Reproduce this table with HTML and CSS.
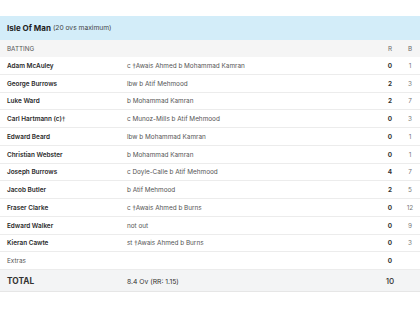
FILE: index.html
```html
<!DOCTYPE html>
<html>
<head>
<meta charset="utf-8">
<link rel="stylesheet" href="styles.css">
</head>
<body>
<div class="card">
  <div class="team"><span class="team-name">Isle Of Man</span><span class="team-sub">(20 ovs maximum)</span></div>
  <div class="row head"><span class="name">BATTING</span><span class="how"></span><span class="r">R</span><span class="b">B</span></div>
  <div class="row"><span class="name">Adam McAuley</span><span class="how">c <span class="dg">†</span>Awais Ahmed b Mohammad Kamran</span><span class="r">0</span><span class="b">1</span></div>
  <div class="row"><span class="name">George Burrows</span><span class="how">lbw b Atif Mehmood</span><span class="r">2</span><span class="b">3</span></div>
  <div class="row"><span class="name">Luke Ward</span><span class="how">b Mohammad Kamran</span><span class="r">2</span><span class="b">7</span></div>
  <div class="row"><span class="name">Carl Hartmann (c)<span class="dg">†</span></span><span class="how">c Munoz-Mills b Atif Mehmood</span><span class="r">0</span><span class="b">3</span></div>
  <div class="row"><span class="name">Edward Beard</span><span class="how">lbw b Mohammad Kamran</span><span class="r">0</span><span class="b">1</span></div>
  <div class="row"><span class="name">Christian Webster</span><span class="how">b Mohammad Kamran</span><span class="r">0</span><span class="b">1</span></div>
  <div class="row"><span class="name">Joseph Burrows</span><span class="how">c Doyle-Calle b Atif Mehmood</span><span class="r">4</span><span class="b">7</span></div>
  <div class="row"><span class="name">Jacob Butler</span><span class="how">b Atif Mehmood</span><span class="r">2</span><span class="b">5</span></div>
  <div class="row"><span class="name">Fraser Clarke</span><span class="how">c <span class="dg">†</span>Awais Ahmed b Burns</span><span class="r">0</span><span class="b">12</span></div>
  <div class="row"><span class="name">Edward Walker</span><span class="how">not out</span><span class="r">0</span><span class="b">9</span></div>
  <div class="row"><span class="name">Kieran Cawte</span><span class="how">st <span class="dg">†</span>Awais Ahmed b Burns</span><span class="r">0</span><span class="b">3</span></div>
  <div class="row extras"><span class="name">Extras</span><span class="how"></span><span class="r">0</span><span class="b"></span></div>
  <div class="row total"><span class="name">TOTAL</span><span class="how">8.4 Ov (RR: 1.15)</span><span class="r">10</span><span class="b"></span></div>
</div>
</body>
</html>
```

FILE: styles.css
```css
html, body {
  margin: 0;
  padding: 0;
  background: #ffffff;
}
body {
  font-family: Inter, "Open Sans", sans-serif;
  color: #222;
}
.card {
  margin-top: 16px;
}
.team {
  height: 24px;
  background: #d3edf9;
  display: flex;
  align-items: center;
  padding-left: 7px;
  gap: 2px;
}
.team-name {
  font-size: 8px;
  font-weight: 700;
  color: #222;
}
.team-sub {
  font-size: 6.7px;
  color: #444;
}
.row {
  display: grid;
  grid-template-columns: 127px 1fr 20px 20px;
  align-items: center;
  height: 17.75px;
  box-sizing: border-box;
  border-bottom: 1px solid #ececec;
  font-size: 6.4px;
  padding-top: 1px;
}
.dg {
  font-family: "DejaVu Sans", sans-serif;
  font-weight: 400;
}
.row .name {
  padding-left: 7px;
  font-weight: 600;
  color: #2a2a2a;
}
.row .how {
  color: #555;
}
.row .r {
  text-align: center;
  font-weight: 700;
  color: #333;
}
.row .b {
  text-align: center;
  color: #777;
}
.row.head {
  height: 17px;
  background: #f5f5f5;
  border-bottom: none;
}
.row.head .name {
  font-weight: 400;
  color: #555;
  font-size: 6.3px;
}
.row.head .r, .row.head .b {
  font-weight: 400;
  color: #666;
  font-size: 6.3px;
}
.row.extras .name {
  font-weight: 400;
  color: #555;
}
.row.total {
  height: 22px;
  background: #f3f4f5;
  border-bottom: 1px solid #e6e6e6;
}
.row.total .name {
  font-size: 8.3px;
  font-weight: 700;
  color: #333;
}
.row.total .how {
  font-size: 6.8px;
  color: #333;
}
.row.total .r {
  font-size: 8px;
  font-weight: 500;
}
```
